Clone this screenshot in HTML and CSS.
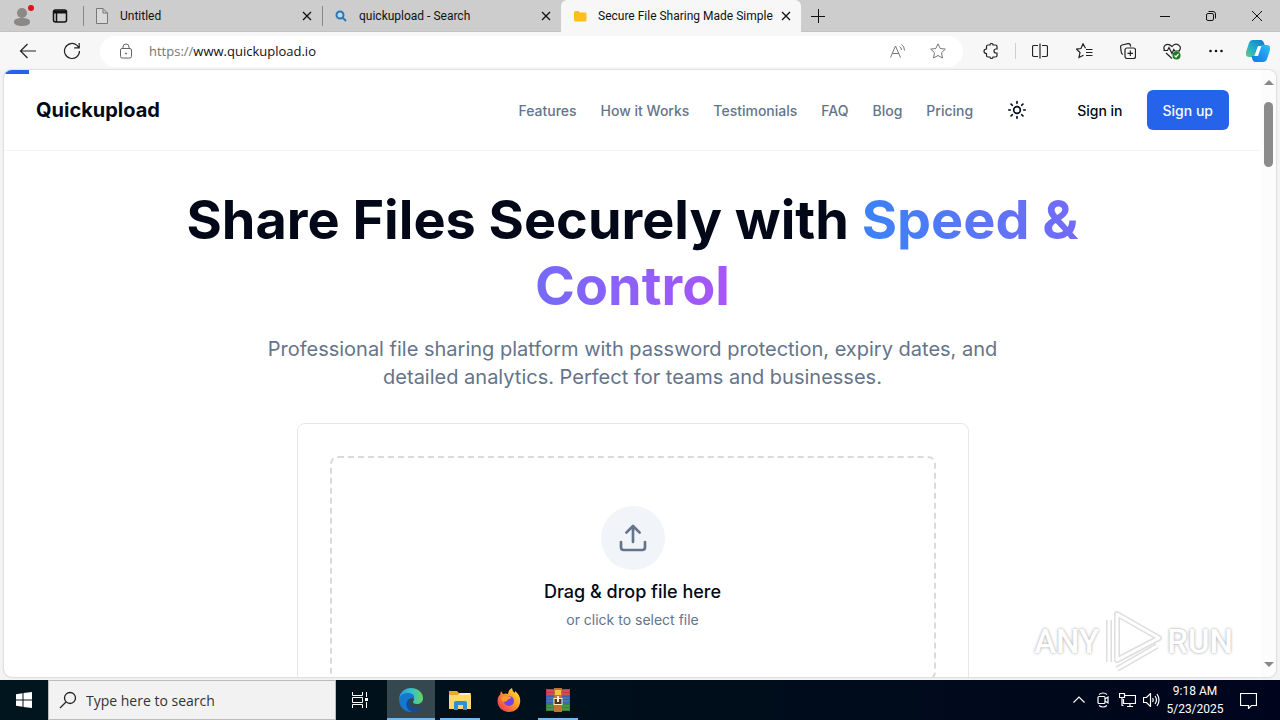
FILE: index.html
```html
<!DOCTYPE html>
<html lang="en">
<head>
<meta charset="utf-8">
<meta name="viewport" content="width=device-width, initial-scale=1">
<title>Secure File Sharing Made Simple</title>
<link rel="stylesheet" href="styles.css">
</head>
<body>
<div class="window">
  <div class="tabbar">
    <button class="tool profile" aria-label="Profile"><svg width="20" height="22" viewBox="0 0 20 22"><circle cx="8" cy="8" r="5" fill="#8b8886"/><path d="M0 17c0-3 3-4 8-4s8 1 8 4-4 4-8 4-8-1-8-4z" fill="#8b8886"/><circle cx="17" cy="3" r="3" fill="#e0131b"/></svg></button>
    <button class="tool" aria-label="Tab actions"><svg width="16" height="16" viewBox="0 0 16 16" fill="none" stroke="#111" stroke-width="1.5"><rect x="1.500" y="2" width="13" height="12" rx="2"/><path d="M2 4h12" stroke-width="3"/><path d="M4.500 5v9"/></svg></button>
    <span class="tab-sep"></span>
    <div class="tab">
      <svg width="14" height="16" viewBox="0 0 14 16" fill="#d9d9d9" stroke="#777"><path d="M1.500.5H8l4.500 4.500v10.500h-11zM8 .5V5h4.500"/></svg>
      <span class="tab-title">Untitled</span>
      <button class="close" aria-label="Close Untitled"><svg width="10" height="10" viewBox="0 0 10 10"><path d="M1 1l8 8M9 1L1 9"/></svg></button>
    </div>
    <span class="tab-sep"></span>
    <div class="tab">
      <svg width="14" height="14" viewBox="0 0 14 14" fill="none" stroke="#2d76b8" stroke-width="2"><circle cx="6" cy="6" r="3.500" fill="#b8dcf0"/><path d="M8.500 8.500l3.500 3.500"/></svg>
      <span class="tab-title">quickupload - Search</span>
      <button class="close" aria-label="Close quickupload - Search"><svg width="10" height="10" viewBox="0 0 10 10"><path d="M1 1l8 8M9 1L1 9"/></svg></button>
    </div>
    <div class="tab active">
      <svg width="14" height="12" viewBox="0 0 14 12"><path d="M1 2.500Q1 1 2.500 1h3L7 2.500h5.500q1 0 1 1v6.500q0 1.500-1.500 1.500H2Q1 11.500 1 10z" fill="#fcbf1e"/></svg>
      <span class="tab-title">Secure File Sharing Made Simple</span>
      <button class="close" aria-label="Close Secure File Sharing Made Simple"><svg width="10" height="10" viewBox="0 0 10 10"><path d="M1 1l8 8M9 1L1 9"/></svg></button>
    </div>
    <button class="newtab" aria-label="New tab"><svg width="14" height="14" viewBox="0 0 14 14" stroke="#111"><path d="M7.500 0v14M0 7.500h14"/></svg></button>
    <div class="controls">
      <button aria-label="Minimize"><svg width="10" height="10" viewBox="0 0 10 10"><path d="M0 5.500h10"/></svg></button>
      <button aria-label="Restore"><svg width="10" height="10" viewBox="0 0 10 10"><rect x=".5" y="2.500" width="7" height="7" rx="1.500"/><path d="M2.500.5H7Q9.500.5 9.500 3v4.500"/></svg></button>
      <button aria-label="Close window"><svg width="10" height="10" viewBox="0 0 10 10"><path d="M0 0l10 10M10 0L0 10"/></svg></button>
    </div>
  </div>

  <div class="toolbar">
    <button class="bar-btn" aria-label="Back"><svg width="18" height="16" viewBox="0 0 18 16"><path d="M17 8H1.500M8.500 1l-7 7 7 7"/></svg></button>
    <button class="bar-btn" aria-label="Refresh"><svg width="18" height="18" viewBox="0 0 18 18"><path d="M16.500 9A7.500 7.500 0 1 1 14 3.400L16 5.500M16.200 1v4.800h-5"/></svg></button>
    <div class="address">
      <svg class="lock" width="14" height="16" viewBox="0 0 14 16" fill="none" stroke="#666"><rect x="1.500" y="5.500" width="11" height="9.500" rx="1.500"/><path d="M4 5.500V4q0-3 3-3t3 3v1.500"/><circle cx="7" cy="10.500" r=".6" fill="#666"/></svg>
      <label class="scheme" for="url">https://</label><input class="url" id="url" type="text" value="www.quickupload.io">
      <button class="pill-btn" aria-label="Read aloud"><svg width="16" height="16" viewBox="0 0 16 16"><path d="M.5 14.500L5.500 3l5 11.500M2.300 10.500h6.500M9.500 3.500q2 1 2 3.500M11.500 1.500q3 2 3 6"/></svg></button>
      <button class="pill-btn" aria-label="Add to favorites"><svg width="16" height="16" viewBox="0 0 16 16"><path d="M8 .8l2.200 4.700 5.100.6-3.800 3.600 1 5.300L8 12.500 3.500 15l1-5.300L.7 6.100l5.100-.6z"/></svg></button>
    </div>
    <button class="bar-btn" aria-label="Extensions"><svg width="16" height="16" viewBox="0 0 16 16"><path d="M5 2h2q0-1.500 1.500-1.500T10 2h2.500q1.500 0 1.500 1.500V6h-1q-2 0-2 2t2 2h1v2.500q0 1.500-1.500 1.500H10q0 1.500-1.500 1.500T7 14H5q-1.500 0-1.500-1.500V10.500Q1 10.300 1 8.200T3.500 6V3.500Q3.500 2 5 2z"/></svg></button>
    <span class="bar-sep"></span>
    <button class="bar-btn" aria-label="Split screen"><svg width="16" height="16" viewBox="0 0 16 16"><path d="M6 2.500H2Q.5 2.500.5 4v8q0 1.500 1.500 1.500h4M10 2.500h4q1.500 0 1.500 1.500v8q0 1.500-1.500 1.500h-4M8 .5v15"/></svg></button>
    <button class="bar-btn" aria-label="Favorites"><svg width="17" height="16" viewBox="0 0 17 16"><path d="M9.500 5.200L7 .8 5 5.500l-4.500.6L4 9.500l-1 5 4.500-2.300M10 6.500h6.500M10 9.500h6.500M10 12.500h6.500"/></svg></button>
    <button class="bar-btn" aria-label="Collections"><svg width="16" height="16" viewBox="0 0 16 16"><path d="M3 11.500Q1.500 11 1.200 9L.6 4Q.4 2.500 2 2l6-1.400Q9.800.3 10.300 2l.4 1.500"/><rect x="5" y="5" width="10.500" height="10.500" rx="2"/><path d="M10.300 7.500v5.500M7.500 10.300H13"/></svg></button>
    <button class="bar-btn" aria-label="Browser essentials"><svg width="18" height="17" viewBox="0 0 18 17"><path d="M2 8Q-.5 4 2.500 2T9 3.500Q12-.3 15.500 2T16 8M3 10l6 5.500M.5 7.500h4L6 4.500l3 6 1.800-4 1 1.500H17"/><circle cx="13.500" cy="12.500" r="4" fill="#187c24" stroke="none"/><path d="M11.500 12.500l1.500 1.500 2.500-3" stroke="#fff"/></svg></button>
    <button class="bar-btn" aria-label="Settings and more"><svg width="14" height="4" viewBox="0 0 14 4"><g fill="#111" stroke="none"><circle cx="1.500" cy="2" r="1.300"/><circle cx="7" cy="2" r="1.300"/><circle cx="12.500" cy="2" r="1.300"/></g></svg></button>
    <button class="bar-btn copilot" aria-label="Copilot"><svg width="24" height="24" viewBox="0 0 24 24"><defs><linearGradient id="ca" x1="0" y1="1" x2="1" y2="0"><stop offset="0" stop-color="#67cb7c"/><stop offset=".4" stop-color="#24b2c6"/><stop offset="1" stop-color="#1473cf"/></linearGradient><linearGradient id="cb" x1="0" y1="1" x2="1" y2="0"><stop offset="0" stop-color="#087be4"/><stop offset=".6" stop-color="#279cf4"/><stop offset="1" stop-color="#27c8e8"/></linearGradient></defs><path d="M7 1h8q2 0 3 3l1 3h-5q-2 0-3 3l-2 6q-1 2-3 2H3q-4 0-3-5L3 4q1-3 4-3z" fill="url(#ca)" stroke="none"/><path d="M17 23H9q-2 0-3-4l-.500-2H9q2 0 3-3l2-6q1-2 3-2h4q4 0 3 5l-3 9q-1 3-4 3z" fill="url(#cb)" stroke="none"/><path d="M12 7h3.500l-3.500 10H8.500z" fill="#f4faff" stroke="none"/></svg></button>
  </div>

  <div class="viewport">
    <div class="page">
      <div class="progress"></div>
      <header class="site-header">
        <a class="brand" href="#">Quickupload</a>
        <nav class="site-nav">
          <a href="#">Features</a>
          <a href="#">How it Works</a>
          <a href="#">Testimonials</a>
          <a href="#">FAQ</a>
          <a href="#">Blog</a>
          <a href="#">Pricing</a>
          <button class="theme" aria-label="Toggle theme"><svg width="20" height="20" viewBox="0 0 24 24" fill="none" stroke="#020817" stroke-width="2" stroke-linecap="round"><circle cx="12" cy="12" r="4"/><path d="M12 2v2M12 20v2M4.930 4.930l1.410 1.410M17.660 17.660l1.410 1.410M2 12h2M20 12h2M6.340 17.660l-1.410 1.410M19.070 4.930l-1.410 1.410"/></svg></button>
          <div class="auth">
            <button class="btn">Sign in</button>
            <button class="btn primary">Sign up</button>
          </div>
        </nav>
      </header>
      <main class="hero">
        <h1>Share Files Securely with <span class="accent">Speed &amp; Control</span></h1>
        <p class="lead">Professional file sharing platform with password protection, expiry dates, and detailed analytics. Perfect for teams and businesses.</p>
        <section class="card">
          <button class="dropzone">
            <span class="upload"><svg width="32" height="32" viewBox="0 0 24 24" fill="none" stroke="#64748b" stroke-width="2" stroke-linecap="round" stroke-linejoin="round"><path d="M21 15v4a2 2 0 0 1-2 2H5a2 2 0 0 1-2-2v-4M17 8l-5-5-5 5M12 3v12"/></svg></span>
            <span class="drop-title">Drag &amp; drop file here</span>
            <span class="drop-sub">or click to select file</span>
          </button>
        </section>
      </main>
    </div>
    <div class="scrollbar" aria-hidden="true"><span class="arrow up"></span><span class="thumb"></span><span class="arrow down"></span></div>
    <div class="watermark"><span>ANY</span><svg width="60" height="64" viewBox="0 0 60 64" fill="none" stroke-linejoin="round"><g stroke="#dedede" stroke-width="6"><path d="M14 4v46l42-22z"/><path d="M6 10v42M14 59l40-23"/></g><g stroke="#fff" stroke-width="3"><path d="M14 4v46l42-22z"/><path d="M6 10v42M14 59l40-23"/></g></svg><span>RUN</span></div>
  </div>

  <footer class="taskbar">
    <button class="start" aria-label="Start"><svg width="16" height="16" viewBox="0 0 16 16" fill="#fff"><path d="M0 2.200L6.500 1.300v6.200H0zM7.500 1.100L16 0v7.500H7.500zM0 8.500h6.500v6.200L0 13.800zM7.500 8.500H16V16l-8.500-1.100z"/></svg></button>
    <label class="search"><svg width="18" height="18" viewBox="0 0 18 18" fill="none" stroke="#222" stroke-width="1.300"><circle cx="11" cy="7" r="5.500"/><path d="M7 11l-6 6"/></svg><input type="text" placeholder="Type here to search" aria-label="Type here to search"></label>
    <div class="apps">
      <button aria-label="Task view"><svg width="18" height="18" viewBox="0 0 18 18" fill="none" stroke="#fff"><path d="M1.500 1v3.500h10V1M1.500 17v-3.500h10V17M1.500 6.500h10v5h-10zM15.500 1v5M15.500 11v6"/><path d="M14 7h3v3h-3z" fill="#fff" stroke="none"/></svg></button>
      <button class="running current" aria-label="Microsoft Edge"><svg width="26" height="26" viewBox="0 0 26 26"><defs><linearGradient id="eg" x1="0" y1="0" x2="1" y2="0"><stop offset="0" stop-color="#2595dc"/><stop offset=".5" stop-color="#35c1ca"/><stop offset="1" stop-color="#65d65e"/></linearGradient></defs><path d="M1 13C1 5 7 1 13 1s12 4 12 10c0 4-3 6-6 6-3 0-4-1-4-2 0-1 1-1 1-3 0-2-2-4-5-4-5 0-9 3-10 5z" fill="url(#eg)"/><path d="M1 12c1-4 5-6 9-6 5 0 7 3 6 6-1-2-6-1-6 4s4 8 9 6c2 0 4-2 4-2-2 4-6 5-10 5C6 25 1 19 1 12z" fill="#1677ce"/><path d="M11 12c-4 3-4 10 3 13 4 0 7-1 9-5-4 2-8 2-10-1-2-2-2-5-2-7z" fill="#124c9d"/></svg></button>
      <button class="running" aria-label="File Explorer"><svg width="24" height="22" viewBox="0 0 24 22"><path d="M1 2h8l2 2h12v16H1z" fill="#e8a92c"/><path d="M1 6h22v14H1z" fill="#ffd869"/><path d="M12 4h10v2H10z" fill="#fff0bb"/><path d="M6 21v-7q0-2 2-2h9q2 0 2 2v7h-4v-5h-5v5z" fill="#2d91d0"/></svg></button>
      <button aria-label="Firefox"><svg width="24" height="24" viewBox="0 0 24 24"><defs><linearGradient id="ff" x1="1" y1="0" x2="0" y2="1"><stop offset="0" stop-color="#fff04b"/><stop offset=".45" stop-color="#ff9726"/><stop offset="1" stop-color="#ed2463"/></linearGradient></defs><path d="M4 3l2 3q3-1 5 0 0-4 4-6 0 3 3 5V3c4 3 6 7 5 12-1 6-6 9-11 9C4 24-1 17 1 10q1-3 2-3z" fill="url(#ff)"/><circle cx="12" cy="13" r="5" fill="#7644d9"/><path d="M5 9q5-2 9 0c0 3-4 1-4 4-4 2-7-1-5-4z" fill="#ff9c2b"/></svg></button>
      <button class="running" aria-label="WinRAR"><svg width="26" height="24" viewBox="0 0 26 24"><rect x="1" y="1" width="24" height="7" fill="#c43a4e"/><rect x="1" y="8" width="24" height="7" fill="#3561b6"/><rect x="1" y="15" width="24" height="8" fill="#36853d"/><path d="M2 3h22M2 6h22M2 10h22M2 13h22M2 18h22M2 21h22" stroke="#d0bfa0" opacity=".35"/><rect x="9" width="8" height="24" fill="#be742e"/><path d="M10 2h6v5h-6z" fill="#f4c247"/><rect x="9" y="10.500" width="8" height="6" fill="#493227" stroke="#fff1c3"/><path d="M13 8v6" stroke="#fff1c3" stroke-width="2"/></svg></button>
    </div>
    <div class="tray">
      <button aria-label="Show hidden icons"><svg width="12" height="8" viewBox="0 0 12 8"><path d="M.5 6.500L6 1l5.500 5.500"/></svg></button>
      <button aria-label="Meet now"><svg width="12" height="16" viewBox="0 0 12 16"><rect x="1" y="4.500" width="7" height="7" rx="1"/><path d="M8 7l3-2v6L8 9M2 2.500q4-3 8 0M2 13.500q4 3 8 0"/></svg></button>
      <button aria-label="Network"><svg width="17" height="14" viewBox="0 0 17 14"><path d="M6 2.500h10.500v8H4.500V6M8 13.500h6M11 10.500v3M.5.5h5v4h-5zM3 4.500v8h1.500"/></svg></button>
      <button aria-label="Volume"><svg width="17" height="14" viewBox="0 0 17 14"><path d="M.5 4.500h3l4-4v13l-4-4h-3zM9.500 5q1.500 2 0 4M12 3q3 4 0 8M14 1q4 6 0 12"/></svg></button>
      <time class="clock"><span>9:18 AM</span><span>5/23/2025</span></time>
      <button class="notify" aria-label="Notifications"><svg width="17" height="17" viewBox="0 0 17 17"><path d="M.5 1.500h16v12h-5l-3 3v-3h-8z"/></svg></button>
    </div>
  </footer>
</div>
</body>
</html>
```
FILE: styles.css
```css
* { box-sizing: border-box; }
body { margin: 0; font-family: Inter, "Liberation Sans", sans-serif; color: #020817; }
button { border: 0; padding: 0; margin: 0; background: none; font: inherit; color: inherit; display: flex; align-items: center; justify-content: center; cursor: pointer; }
a { color: inherit; text-decoration: none; }
svg { flex: none; display: block; }
input { border: 0; padding: 0; background: none; outline: 0; min-width: 0; }

.window { display: flex; flex-direction: column; height: 100vh; overflow: hidden; background: #f3f3f3; }

/* Tab strip */
.tabbar { display: flex; align-items: center; flex: none; height: 32px; padding-left: 3px; background: #cdcdcd; border-bottom: 1px solid #c2c2c2; font: 12px Roboto, "Open Sans", sans-serif; color: #111; }
.tool { width: 38px; height: 32px; }
.profile svg { margin-left: 4px; }
.tool + .tab-sep { margin-left: 4px; }
.tab-sep { width: 1px; height: 20px; background: #888; }
.tab { display: flex; align-items: center; gap: 11px; flex: 0 1 238px; min-width: 0; height: 32px; padding: 0 5px 0 11px; }
.tab.active { flex-basis: 240px; background: #f7f7f7; border-radius: 6px 6px 0 0; padding-left: 12px; }
.tab-title { flex: 1; white-space: nowrap; overflow: hidden; }
.close { width: 20px; height: 20px; margin-left: -11px; }
.close svg { stroke: #111; stroke-width: 1.3; }
.newtab { width: 34px; height: 32px; }
.controls { display: flex; margin-left: auto; }
.controls button { width: 46px; height: 32px; }
.controls svg { fill: none; stroke: #111; }

/* Toolbar */
.toolbar { display: flex; align-items: center; flex: none; height: 38px; padding: 0 2px 0 6px; background: #f7f7f7; }
.bar-btn { width: 44px; height: 32px; flex: none; }
.bar-btn svg { fill: none; stroke: #222; stroke-width: 1.2; }
.bar-btn.copilot { width: 40px; }
.bar-sep { width: 1px; height: 16px; margin: 0 2px; background: #cfcfcf; }
.address { display: flex; align-items: center; flex: 1; height: 31px; margin: 0 6px; padding: 0 5px 0 19px; border-radius: 16px; background: #fff; font: 13px "Open Sans", "Noto Sans", sans-serif; }
.lock { margin-right: 16px; }
.scheme { color: #757575; }
.url { flex: 1; font: inherit; color: #111; }
.pill-btn { width: 40px; height: 30px; }
.pill-btn svg { fill: none; stroke: #777; }

/* Page viewport */
.viewport { position: relative; display: flex; flex: 1; min-height: 0; margin: 0 4px 3px; overflow: hidden; background: #fff; border-radius: 8px; box-shadow: 0 0 2px #aaa; }
.page { position: relative; flex: 1; min-width: 0; overflow: hidden; }
.progress { position: absolute; top: 0; left: 0; width: 25px; height: 4px; background: #2563eb; }
.site-header { display: flex; align-items: center; justify-content: space-between; height: 81px; padding: 0 32px; border-bottom: 1px solid #f3f4f6; }
.brand { font-size: 20px; font-weight: 700; }
.site-nav { display: flex; align-items: center; gap: 24px; font-size: 14px; font-weight: 500; color: #64748b; }
.theme { width: 40px; height: 40px; }
.auth { display: flex; gap: 8px; color: #020817; }
.btn { height: 40px; padding: 0 16px; border-radius: 6px; }
.btn.primary { background: #2563eb; color: #f8fafc; }

.hero { display: flex; flex-direction: column; align-items: center; padding: 36px 32px 0; text-align: center; }
.hero h1 { max-width: 960px; margin: 0; font-size: 54px; line-height: 66px; font-weight: 700; }
.accent { color: transparent; background: linear-gradient(90deg, #3b82f6, #a855f7); -webkit-background-clip: text; background-clip: text; }
.lead { max-width: 768px; margin: 16px 0 32px; font-size: 20px; line-height: 28px; color: #64748b; }
.card { width: 100%; max-width: 672px; padding: 32px; border: 1px solid #e5e7eb; border-radius: 8px; }
.dropzone { flex-direction: column; width: 100%; padding: 48px; border: 2px dashed #d8dade; border-radius: 8px; }
.upload { display: flex; align-items: center; justify-content: center; width: 64px; height: 64px; margin-bottom: 8px; border-radius: 50%; background: #f1f5f9; }
.drop-title { margin-bottom: 4px; font-size: 18px; line-height: 28px; font-weight: 500; }
.drop-sub { font-size: 14px; line-height: 20px; color: #64748b; }

.scrollbar { display: flex; flex-direction: column; align-items: center; flex: none; width: 15px; padding: 10px 0; background: #fcfcfc; }
.arrow { border: 5px solid transparent; }
.arrow.up { border-top: 0; border-bottom-color: #888; }
.arrow.down { border-bottom: 0; border-top-color: #888; margin-top: auto; }
.thumb { width: 9px; height: 65px; margin-top: 17px; border-radius: 5px; background: #8b8b8b; }
.watermark { position: absolute; right: 43px; bottom: 3px; display: flex; align-items: center; gap: 4px; color: #fff; font: 500 33px/64px Roboto, "Liberation Sans", sans-serif; text-shadow: 0 0 3px #999; pointer-events: none; }

/* Taskbar */
.taskbar { display: flex; flex: none; height: 40px; background: linear-gradient(90deg, #00151d, #000d1b 60%, #00051d); color: #fff; font-family: "Open Sans", "Noto Sans", sans-serif; }
.start { width: 48px; }
.search { display: flex; align-items: center; gap: 9px; width: 288px; padding-left: 10px; background: #f2f2f2; border: 1px solid #bbb; font-size: 14px; }
.search input { flex: 1; font: inherit; color: #333; }
.search input::placeholder { color: #333; opacity: 1; }
.apps { display: flex; gap: 1px; }
.apps button { position: relative; width: 48px; }
.apps button:first-child { margin-right: 2px; }
.apps .current { background: #35474f; }
.running::after { content: ""; position: absolute; left: 4px; right: 4px; bottom: 0; height: 2px; background: #76b9ed; }
.running.current::after { left: 0; right: 0; }
.tray { display: flex; align-items: center; margin-left: auto; padding-right: 11px; }
.tray button { width: 24px; height: 40px; }
.tray svg { fill: none; stroke: #fff; stroke-width: 1.2; }
.clock { display: flex; flex-direction: column; width: 64px; text-align: center; font: 12px/18px Roboto, "Open Sans", sans-serif; }
.tray .notify { width: 42px; }
```
